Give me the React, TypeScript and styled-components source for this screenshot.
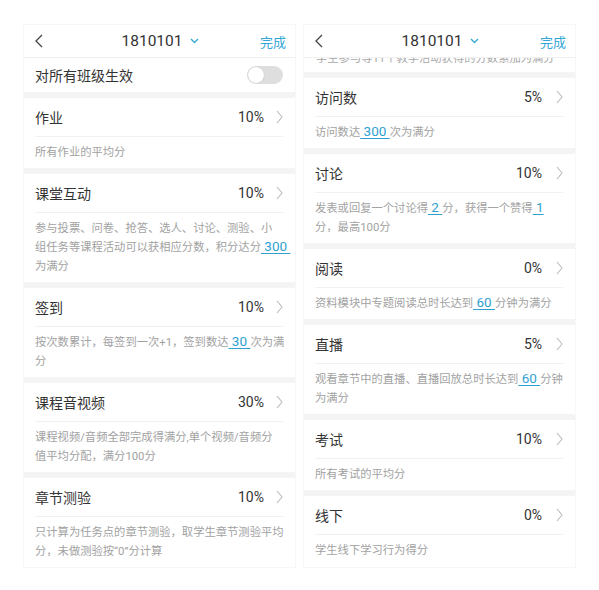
import React from "react";
import styled, { createGlobalStyle } from "styled-components";

const Global = createGlobalStyle`
  html, body { margin: 0; padding: 0; background: #ffffff; }
  body { font-family: Roboto, "Noto Sans CJK SC", sans-serif; -webkit-font-smoothing: antialiased; }
`;

const Page = styled.div`
  display: flex;
  gap: 9px;
  padding: 25px 0 0 24px;
  width: 599px;
  height: 590px;
  box-sizing: border-box;
  background: #ffffff;
`;

const Phone = styled.div`
  width: 271px;
  height: 542px;
  overflow: hidden;
  background: #ffffff;
  display: flex;
  flex-direction: column;
  box-shadow: 0 0 0 1px #f7f7f7;
`;

const NavBar = styled.div`
  height: 33px;
  flex-shrink: 0;
  display: grid;
  grid-template-columns: 1fr auto 1fr;
  align-items: center;
  padding: 0 9px 0 11px;
  border-bottom: 1px solid #f0f0f0;
  box-sizing: border-box;
`;

const BackBtn = styled.div`
  display: flex;
  align-items: center;
`;

const NavTitle = styled.div`
  display: flex;
  align-items: center;
  gap: 8px;
  font-size: 15.5px;
  color: #333333;
`;

const Done = styled.div`
  justify-self: end;
  font-size: 13px;
  color: #35a7d6;
`;

const ToggleRow = styled.div`
  height: 34px;
  flex-shrink: 0;
  display: flex;
  align-items: center;
  justify-content: space-between;
  padding: 0 12px 0 11px;
  font-size: 14px;
  color: #333333;
`;

const Switch = styled.div`
  width: 36px;
  height: 18px;
  border-radius: 9px;
  background: #dedede;
  display: flex;
  align-items: center;
  padding: 0 1px;
  box-sizing: border-box;
`;

const Knob = styled.div`
  width: 16px;
  height: 16px;
  border-radius: 50%;
  background: #ffffff;
  box-shadow: 0 0 1px rgba(0, 0, 0, 0.25);
`;

const Gap = styled.div`
  height: 6px;
  flex-shrink: 0;
  background: #f4f4f4;
`;

const Section = styled.div`
  flex-shrink: 0;
  display: flex;
  flex-direction: column;
`;

const Header = styled.div<{ $pad: number }>`
  height: 38px;
  display: flex;
  align-items: center;
  padding: 0 ${(p) => p.$pad}px 0 ${(p) => p.$pad - 1}px;
  font-size: 14px;
  color: #333333;
`;

const Title = styled.div`
  flex: 1;
`;

const Percent = styled.div<{ $gap: number }>`
  font-size: 14px;
  color: #333333;
  margin-right: ${(p) => p.$gap}px;
`;

const Divider = styled.div<{ $pad: number }>`
  height: 1px;
  margin: 0 ${(p) => p.$pad}px 0 ${(p) => p.$pad - 1}px;
  background: #f1f1f1;
`;

const Desc = styled.div<{ $pad: number }>`
  padding: 6px ${(p) => p.$pad}px 6px ${(p) => p.$pad - 1}px;
  font-size: 11.3px;
  line-height: 19px;
  color: #a2a2a2;
  white-space: nowrap;
`;

const DescLine = styled.div`
  height: 19px;
`;

const PartialDesc = styled.div`
  height: 14px;
  flex-shrink: 0;
  overflow: hidden;
  padding: 0 12px;
  font-size: 11.3px;
  line-height: 19px;
  color: #a8a8a8;
  white-space: nowrap;
`;

const PartialLine = styled.div`
  margin-top: -9px;
`;

const Link = styled.span`
  color: #2f9fd2;
  font-size: 13.5px;
  line-height: 1;
  text-decoration: underline;
  text-underline-offset: 2px;
`;

const BackIcon = () => (
  <svg width="8" height="14" viewBox="0 0 8 14">
    <polyline points="7,1 1,7 7,13" fill="none" stroke="#444" strokeWidth="1.3" />
  </svg>
);

const DownIcon = () => (
  <svg width="9" height="6" viewBox="0 0 9 6">
    <polyline points="1,1 4.5,4.5 8,1" fill="none" stroke="#35a7d6" strokeWidth="1.4" />
  </svg>
);

const ChevronRight = () => (
  <svg width="7" height="14" viewBox="0 0 7 14">
    <polyline points="1,1 6,7 1,13" fill="none" stroke="#bcbcbc" strokeWidth="1.1" />
  </svg>
);

const Nav = () => (
  <NavBar>
    <BackBtn>
      <BackIcon />
    </BackBtn>
    <NavTitle>
      1810101
      <DownIcon />
    </NavTitle>
    <Done>完成</Done>
  </NavBar>
);

type Item = { title: string; pct: string; lines: React.ReactNode[] };

const L = ({ v }: { v: string }) => <Link>{"\u00a0" + v + "\u00a0"}</Link>;

const leftItems: Item[] = [
  { title: "作业", pct: "10%", lines: ["所有作业的平均分"] },
  {
    title: "课堂互动",
    pct: "10%",
    lines: [
      "参与投票、问卷、抢答、选人、讨论、测验、小",
      <>
        组任务等课程活动可以获相应分数，积分达分<L v="300" />
      </>,
      "为满分",
    ],
  },
  {
    title: "签到",
    pct: "10%",
    lines: [
      <>
        按次数累计，每签到一次+1，签到数达<L v="30" />次为满
      </>,
      "分",
    ],
  },
  {
    title: "课程音视频",
    pct: "30%",
    lines: ["课程视频/音频全部完成得满分,单个视频/音频分", "值平均分配，满分100分"],
  },
  {
    title: "章节测验",
    pct: "10%",
    lines: ["只计算为任务点的章节测验，取学生章节测验平均", "分，未做测验按\u201c0\u201d分计算"],
  },
];

const rightItems: Item[] = [
  {
    title: "访问数",
    pct: "5%",
    lines: [
      <>
        访问数达<L v="300" />次为满分
      </>,
    ],
  },
  {
    title: "讨论",
    pct: "10%",
    lines: [
      <>
        发表或回复一个讨论得<L v="2" />分，获得一个赞得<Link>{"\u00a01"}</Link>
      </>,
      "分，最高100分",
    ],
  },
  {
    title: "阅读",
    pct: "0%",
    lines: [
      <>
        资料模块中专题阅读总时长达到<L v="60" />分钟为满分
      </>,
    ],
  },
  {
    title: "直播",
    pct: "5%",
    lines: [
      <>
        观看章节中的直播、直播回放总时长达到<L v="60" />分钟
      </>,
      "为满分",
    ],
  },
  { title: "考试", pct: "10%", lines: ["所有考试的平均分"] },
  { title: "线下", pct: "0%", lines: ["学生线下学习行为得分"] },
];

const Block = ({ item, pad, gap }: { item: Item; pad: number; gap: number }) => (
  <Section>
    <Header $pad={pad}>
      <Title>{item.title}</Title>
      <Percent $gap={gap}>{item.pct}</Percent>
      <ChevronRight />
    </Header>
    <Divider $pad={pad} />
    <Desc $pad={pad}>
      {item.lines.map((l, i) => (
        <DescLine key={i}>{l}</DescLine>
      ))}
    </Desc>
  </Section>
);

export default function App() {
  return (
    <>
      <Global />
      <Page>
        <Phone>
          <Nav />
          <ToggleRow>
            对所有班级生效
            <Switch>
              <Knob />
            </Switch>
          </ToggleRow>
          {leftItems.map((it) => (
            <React.Fragment key={it.title}>
              <Gap />
              <Block item={it} pad={12} gap={12} />
            </React.Fragment>
          ))}
        </Phone>
        <Phone>
          <Nav />
          <PartialDesc>
            <PartialLine>学生参与等11个教学活动获得的分数累加为满分</PartialLine>
          </PartialDesc>
          {rightItems.map((it) => (
            <React.Fragment key={it.title}>
              <Gap />
              <Block item={it} pad={12} gap={14} />
            </React.Fragment>
          ))}
        </Phone>
      </Page>
    </>
  );
}
